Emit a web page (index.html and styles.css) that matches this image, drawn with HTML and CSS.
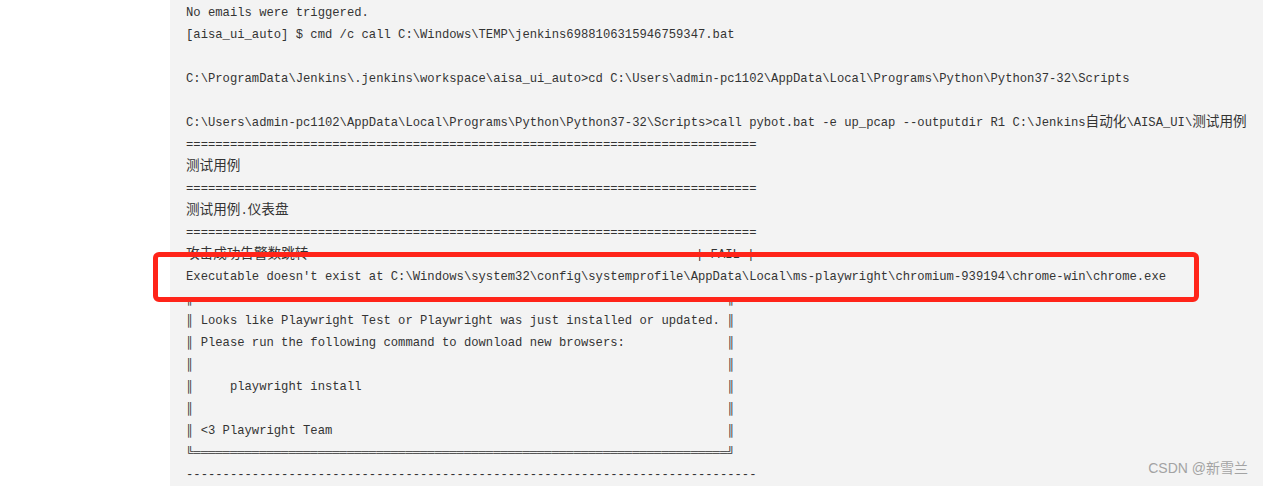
FILE: index.html
```html
<!DOCTYPE html>
<html lang="zh-CN">
<head>
<meta charset="utf-8">
<title>Jenkins console output</title>
<link rel="stylesheet" href="styles.css">
</head>
<body>
<div class="page">
  <div class="gutter"></div>
  <main class="panel">
<pre class="console">No emails were triggered.
[aisa_ui_auto] $ cmd /c call C:\Windows\TEMP\jenkins6988106315946759347.bat

C:\ProgramData\Jenkins\.jenkins\workspace\aisa_ui_auto>cd C:\Users\admin-pc1102\AppData\Local\Programs\Python\Python37-32\Scripts

C:\Users\admin-pc1102\AppData\Local\Programs\Python\Python37-32\Scripts>call pybot.bat -e up_pcap --outputdir R1 C:\Jenkins<span class="cjk">自动化</span>\AISA_UI\<span class="cjk">测试用例</span>
==============================================================================
<span class="cjk">测试用例</span>
==============================================================================
<span class="cjk">测试用例</span>.<span class="cjk">仪表盘</span>
==============================================================================
<span class="cjk">攻击成功告警数跳转</span>                                                     | FAIL |
Executable doesn't exist at C:\Windows\system32\config\systemprofile\AppData\Local\ms-playwright\chromium-939194\chrome-win\chrome.exe
╔═════════════════════════════════════════════════════════════════════════╗
║ Looks like Playwright Test or Playwright was just installed or updated. ║
║ Please run the following command to download new browsers:              ║
║                                                                         ║
║     playwright install                                                  ║
║                                                                         ║
║ &lt;3 Playwright Team                                                      ║
╚═════════════════════════════════════════════════════════════════════════╝
------------------------------------------------------------------------------</pre>
  </main>
  <div class="highlight"></div>
  <div class="credit">CSDN @新雪兰</div>
</div>
</body>
</html>
```

FILE: styles.css
```css
html, body {
  margin: 0;
  padding: 0;
  background: #ffffff;
}

.page {
  position: relative;
  display: flex;
  width: 1263px;
  height: 486px;
  overflow: hidden;
}

.gutter {
  flex: 0 0 170px;
  background: #ffffff;
}

.panel {
  flex: 1 1 auto;
  background: #f3f3f3;
  padding: 2px 0 0 16px;
}

.console {
  margin: 0;
  font-family: "Liberation Mono", "DejaVu Sans Mono", "Noto Sans CJK SC", monospace;
  font-size: 12.2px;
  line-height: 22px;
  color: #333333;
  white-space: pre;
}

.cjk {
  font-family: "Noto Sans CJK SC", sans-serif;
  font-size: 13.6px;
  line-height: 1;
}

.highlight {
  position: absolute;
  left: 153px;
  top: 252px;
  width: 1046px;
  height: 50px;
  box-sizing: border-box;
  border: 5px solid #ff2419;
  border-radius: 6px;
}

.credit {
  position: absolute;
  right: 15px;
  bottom: 9px;
  font-family: "Liberation Sans", Arial, "Noto Sans CJK SC", sans-serif;
  font-size: 14px;
  color: #a3a3a3;
}
```
